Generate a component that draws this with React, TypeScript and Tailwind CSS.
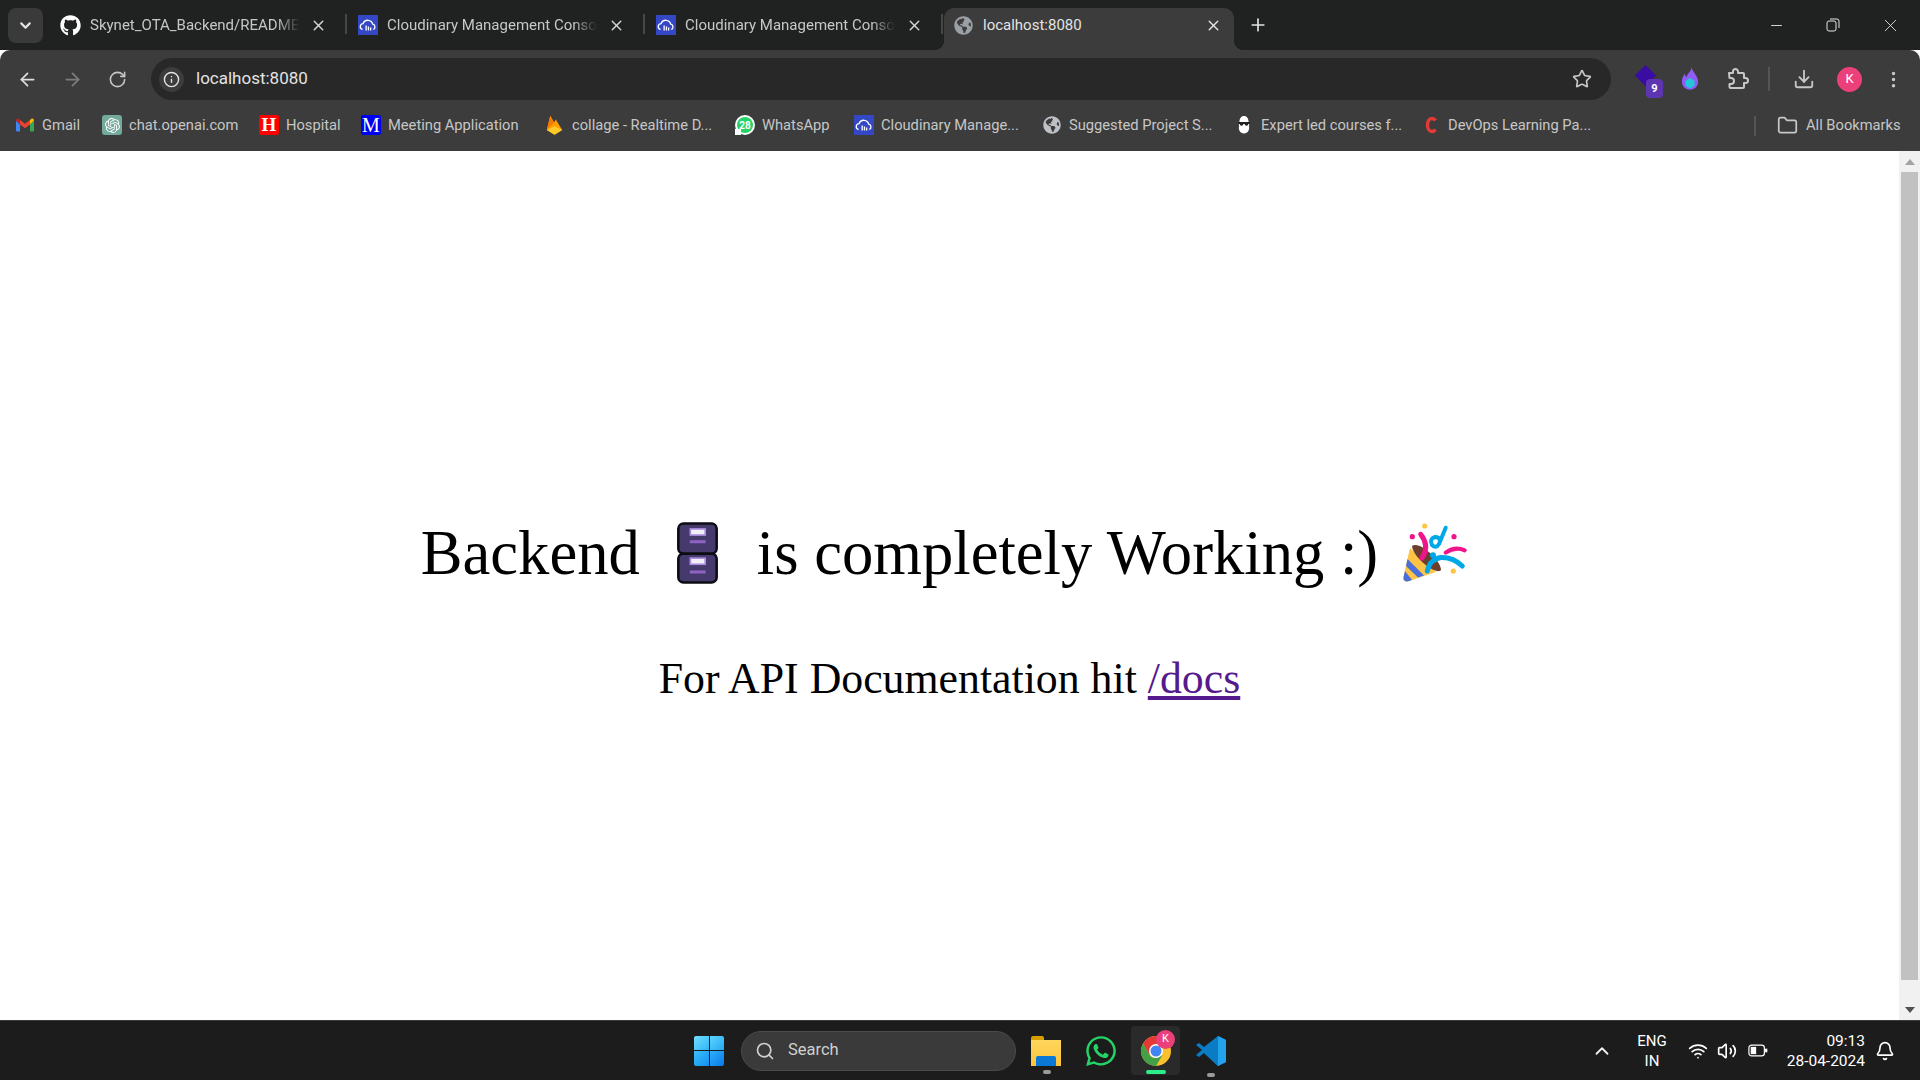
import { ArrowLeft, ArrowRight, RotateCw, Info, Star, Download, EllipsisVertical, Plus, X, ChevronDown, ChevronUp, Minus, Folder, Search, Wifi, Volume2, Bell } from "lucide-react";
import { FaGithub, FaWhatsapp, FaGlobeAmericas } from "react-icons/fa";
import { SiOpenai } from "react-icons/si";

const uiFont = "font-['Roboto','Open_Sans',sans-serif]";

const CloudinaryIcon = () => (
  <svg viewBox="0 0 20 20" className="w-5 h-5 shrink-0">
    <rect width="20" height="20" fill="#3448c5" />
    <path d="M4.5 14.5a3 3 0 0 1 .6-5.9 5 5 0 0 1 9.6.6 2.8 2.8 0 0 1 .6 5.3" fill="none" stroke="#fff" strokeWidth="1.3" />
    <path d="M7.5 10.5h1.3v5H7.500zM9.800 11.500h1.300v4H9.800zM12 12.500h1.300v3H12z" fill="#fff" />
  </svg>
);

const GmailIcon = () => (
  <svg viewBox="0 0 20 20" className="w-5 h-5 shrink-0">
    <path d="M1 5.500v9.800q0 1.200 1.200 1.200H5V9.500z" fill="#4285f4" />
    <path d="M19 5.500v9.800q0 1.200-1.200 1.200H15V9.500z" fill="#34a853" />
    <path d="M1 5.500 5 9.500V5L3.500 3.800Q1.500 2.800 1 5.500z" fill="#c5221f" />
    <path d="M5 5v4.500l5 3.700 5-3.700V5l-5 3.800z" fill="#ea4335" />
    <path d="M15 5v4.500l4-4q-.5-2.700-2.500-1.700z" fill="#fbbc04" />
  </svg>
);

const FirebaseIcon = () => (
  <svg viewBox="0 0 20 24" className="w-[17px] h-[22px] shrink-0 mx-[2px]">
    <path d="M1 18 5 1l4.500 8 2-3.500L19 18l-9 5.500z" fill="#ffa000" />
    <path d="M9.500 9 1 18 5 1z" fill="#f57c00" />
    <path d="M1 18 10 13.500 19 18l-9 5.500z" fill="#ffca28" />
  </svg>
);

const ExpertIcon = () => (
  <svg viewBox="0 0 20 20" className="w-5 h-5 shrink-0">
    <path d="M10 1c3 0 4.500 2.500 4.500 5.500l1 1.500-.6 3c1 3-.8 7.500-4.900 7.500s-5.900-4.500-4.900-7.500l-.6-3 1-1.500C5.500 3.500 7 1 10 1z" fill="#fff" />
    <rect x="4" y="7" width="12" height="2" fill="#222" />
    <circle cx="7.500" cy="9" r="1.800" fill="#222" />
    <circle cx="12.500" cy="9" r="1.800" fill="#222" />
  </svg>
);

const DevopsIcon = () => (
  <svg viewBox="0 0 20 20" className="w-5 h-5 shrink-0">
    <path d="M14.500 5.500C13.500 4 12.500 3.500 11 3.500 8.500 3.500 6.500 6 6.500 10s2 6.500 4.500 6.500c1.500 0 2.500-.5 3.500-2" fill="none" stroke="#e53935" strokeWidth="3.400" />
  </svg>
);

const WhatsappBadge = () => (
  <span className="relative w-5 h-5 shrink-0 rounded-full bg-[#25d366] border-2 border-white flex items-center justify-center text-white text-[10px] font-bold">
    <span className="absolute left-[-2px] bottom-[-2px] w-[6px] h-[6px] bg-white" />
    <span className="relative">28</span>
  </span>
);

const bookmarks = [
  { label: "Gmail", icon: <GmailIcon />, width: "w-[87px]" },
  { label: "chat.openai.com", icon: <span className="w-5 h-5 shrink-0 rounded-[3px] bg-[#74aa9c] flex items-center justify-center text-white"><SiOpenai size={15} /></span>, width: "w-[157px]" },
  { label: "Hospital", icon: <span className="w-5 h-5 shrink-0 rounded-[2px] bg-[#ff0000] flex items-center justify-center text-white font-bold text-[19px] font-['Liberation_Serif',serif]">H</span>, width: "w-[102px]" },
  { label: "Meeting Application", icon: <span className="w-5 h-5 shrink-0 rounded-[2px] bg-[#0000f0] flex items-center justify-center text-white text-[20px] font-['Liberation_Serif',serif]">M</span>, width: "w-[183px]" },
  { label: "collage - Realtime D...", icon: <FirebaseIcon />, width: "w-[191px]" },
  { label: "WhatsApp", icon: <WhatsappBadge />, width: "w-[119px]" },
  { label: "Cloudinary Manage...", icon: <CloudinaryIcon />, width: "w-[188px]" },
  { label: "Suggested Project S...", icon: <span className="text-[#bdc1c6] shrink-0 w-5 flex justify-center"><FaGlobeAmericas size={18} /></span>, width: "w-[192px]" },
  { label: "Expert led courses f...", icon: <ExpertIcon />, width: "w-[187px]" },
  { label: "DevOps Learning Pa...", icon: <DevopsIcon />, width: "w-[190px]" },
];

function Tab({ title, icon }: { title: string; icon: React.ReactNode }) {
  return (
    <div className="relative w-[298px] h-[42px] flex items-center pb-[8px] pl-[11px] pr-[14px] text-[#c7c7c7] shrink-0">
      {icon}
      <span className="ml-[9px] w-[210px] overflow-hidden whitespace-nowrap text-[15px] [mask-image:linear-gradient(to_left,transparent,black_24px)]">{title}</span>
      <X size={17} className="ml-auto mr-[6px] text-[#d5d5d5]" />
      <span className="absolute right-0 top-[6px] w-[2px] h-[20px] bg-[#474747]" />
    </div>
  );
}

function ActiveTab() {
  return (
    <div className="relative w-[290px] h-[42px] ml-[1px] rounded-t-[10px] bg-[#3c3c3c] flex items-center pb-[8px] pl-[9px] pr-[12px] text-[#e3e3e3] shrink-0">
      <span className="absolute left-[-10px] bottom-0 w-[10px] h-[10px] bg-[radial-gradient(circle_at_0_0,transparent_10px,#3c3c3c_10.500px)]" />
      <span className="absolute right-[-10px] bottom-0 w-[10px] h-[10px] bg-[radial-gradient(circle_at_100%_0,transparent_10px,#3c3c3c_10.500px)]" />
      <span className="text-[#9aa0a6] ml-[1px]"><FaGlobeAmericas size={19} /></span>
      <span className="ml-[10px] text-[15px]">localhost:8080</span>
      <X size={17} className="ml-auto text-[#e3e3e3]" />
    </div>
  );
}

const FileCabinet = () => (
  <svg viewBox="0 0 40 60" className="w-[41px] h-[62px] ml-[37px] mr-[39px] shrink-0">
    <rect x="1.300" y="1.300" width="37.400" height="29.400" rx="5" fill="#453a6b" stroke="#0c0c14" strokeWidth="2.500" />
    <rect x="1.300" y="30.700" width="37.400" height="28" rx="5" fill="#453a6b" stroke="#0c0c14" strokeWidth="2.500" />
    <rect x="13" y="6.500" width="14.500" height="6" fill="#f2f0f7" stroke="#a98adf" strokeWidth="1.600" />
    <rect x="12.500" y="17.500" width="15.500" height="3" fill="#8f62c4" />
    <rect x="13" y="35" width="14.500" height="6" fill="#f2f0f7" stroke="#a98adf" strokeWidth="1.600" />
    <rect x="12.500" y="47" width="15.500" height="3" fill="#8f62c4" />
  </svg>
);

const PartyPopper = () => (
  <svg viewBox="0 0 64 62" className="w-[64px] h-[62px] ml-[25px] shrink-0">
    <path d="M7 26 .5 55q-1 5 4 4.500L33 50z" fill="#ffc445" />
    <path d="M4.500 37 21 53.500 15 55.500 3 44zM2 49l7 9-4.500 1.500q-4.500 0-4-4.500z" fill="#4a6fd8" />
    <path d="M9 24C16 18 38 38 38 48 34 54 10 36 9 24z" fill="#6b3f2c" />
    <path d="M17.700 12.300Q27 24 19 36" fill="none" stroke="#f0148c" strokeWidth="5" strokeLinecap="round" />
    <path d="M42.700 5.700 36 22q-3 5-7 1-3-6 3-8 4 0 5 3" fill="none" stroke="#00a8e8" strokeWidth="4" strokeLinecap="round" />
    <path d="M42.700 30.700Q52 24 61.700 28.300" fill="none" stroke="#f0148c" strokeWidth="4" strokeLinecap="round" />
    <path d="M24.300 49Q27 37 38 35.500 50 35 59.300 44" fill="none" stroke="#00a8e8" strokeWidth="5" strokeLinecap="round" />
    <circle cx="30" cy="33.300" r="3" fill="#00a8e8" />
    <circle cx="9.300" cy="14.700" r="2.600" fill="#f0148c" />
    <circle cx="21.700" cy="4" r="2.600" fill="#ffc445" />
    <circle cx="51" cy="14.700" r="2.600" fill="#f0148c" />
    <circle cx="50.300" cy="49" r="2.600" fill="#ffc445" />
  </svg>
);

const ChromeIcon = () => (
  <svg viewBox="0 0 32 32" className="w-8 h-8">
    <circle cx="16" cy="16" r="15" fill="#fbc02d" />
    <path d="M16 1a15 15 0 0 0-13 7.500L9.500 20 16 9h13A15 15 0 0 0 16 1z" fill="#e53935" />
    <path d="M3 8.500A15 15 0 0 0 16 31l6.500-11-6.500 3a7 7 0 0 1-6.500-3z" fill="#43a047" />
    <circle cx="16" cy="16" r="7" fill="#fff" />
    <circle cx="16" cy="16" r="5.500" fill="#4285f4" />
  </svg>
);

const VSCodeIcon = () => (
  <svg viewBox="0 0 32 32" className="w-8 h-8">
    <path d="M23 1 31 5v22l-8 4-14-13z" fill="#0a7cc4" />
    <path d="M23 1 31 5v22l-8 4z" fill="#23a3ee" />
    <path d="m23 9-9 7 9 7v8L9 18l-5 4-3-2 6-5-6-5 3-2 5 4L23 1z" fill="#0a7cc4" />
  </svg>
);

const PuzzleOutline = () => (
  <svg viewBox="0 0 24 24" className="w-[24px] h-[24px] ml-[26px] text-[#c7c7c7]" fill="none" stroke="currentColor" strokeWidth="2" strokeLinejoin="round">
    <path d="M4 6h4V4.500a2.500 2.500 0 0 1 5 0V6h5q1 0 1 1v4h1.500a2.500 2.500 0 0 1 0 5H19v4q0 1-1 1H5.500q-1 0-1-1v-3H6a3 3 0 0 0 0-6H4.500z" />
  </svg>
);

export default function App() {
  return (
    <div className={`w-[1920px] h-[1080px] flex flex-col overflow-hidden bg-white ${uiFont}`}>
      {/* tab strip */}
      <div className="h-[50px] bg-[#202221] flex items-end shrink-0">
        <div className="w-[35px] h-[35px] ml-2 mb-[7px] mr-[6px] rounded-lg bg-[#3a3a3a] flex items-center justify-center text-[#e3e3e3] shrink-0">
          <ChevronDown size={17} strokeWidth={3} />
        </div>
        <Tab title="Skynet_OTA_Backend/README.md" icon={<FaGithub size={21} className="text-white shrink-0" />} />
        <Tab title="Cloudinary Management Console" icon={<CloudinaryIcon />} />
        <Tab title="Cloudinary Management Console" icon={<CloudinaryIcon />} />
        <ActiveTab />
        <Plus size={20} className="ml-[14px] mb-[15px] text-[#e3e3e3] shrink-0" />
        <div className="ml-auto flex items-center h-[50px] text-[#e3e3e3]">
          <Minus size={17} strokeWidth={1.3} className="mr-[41px]" />
          <svg viewBox="0 0 14 14" className="w-[14px] h-[14px] mr-[40px]" fill="none" stroke="currentColor">
            <rect x="1" y="3" width="9" height="10" rx="2" />
            <path d="M4 1h7q2 0 2 2v7" />
          </svg>
          <X size={21} strokeWidth={1} className="mr-[19px]" />
        </div>
      </div>

      {/* toolbar */}
      <div className="h-[58px] bg-[#3c3c3c] flex items-center shrink-0 rounded-tl-[10px] rounded-tr-[10px]">
        <ArrowLeft size={21} className="ml-[17px] text-[#dedede]" />
        <ArrowRight size={21} className="ml-[24px] text-[#7d7d7d]" />
        <RotateCw size={19} className="ml-[25px] text-[#c7c7c7]" />
        <div className="ml-[24px] w-[1460px] h-[42px] rounded-full bg-[#282828] flex items-center pl-[8px] pr-[19px]">
          <span className="w-[25px] h-[25px] rounded-full bg-[#3c3c3c] flex items-center justify-center text-[#e3e3e3]"><Info size={17} /></span>
          <span className="ml-[12px] text-[17px] text-[#e3e3e3]">localhost:8080</span>
          <Star size={20} className="ml-auto text-[#c7c7c7]" />
        </div>
        <div className="relative w-6 h-6 ml-[25px]">
          <span className="absolute left-[2px] top-[1px] w-[15px] h-[15px] rotate-45 bg-[#3a0ca3]" />
          <span className="absolute left-[10px] top-[12px] w-[17px] h-[19px] rounded-[4px] bg-[#5e35b1] text-white text-[11px] font-bold leading-[19px] text-center">9</span>
        </div>
        <svg viewBox="0 0 20 26" className="w-[18px] h-[24px] ml-[21px]">
          <path d="M12 0c0 5 7 9 7 16a9 9 0 0 1-18 0c0-4 1.500-6 3-9 .5 2 1 3 2 4 1-4 5-6 6-11z" fill="#8f5cf5" />
          <path d="m10 12 5 3v5.500l-5 3-5-3V15z" fill="#22c7d8" />
        </svg>
        <PuzzleOutline />
        <span className="ml-[19px] w-[2px] h-6 bg-[#555]" />
        <Download size={22} className="ml-[23px] text-[#c7c7c7]" />
        <span className="ml-[22px] w-[25px] h-[25px] rounded-full bg-[#ec407a] text-white text-[13px] flex items-center justify-center">K</span>
        <EllipsisVertical size={21} className="ml-[21px] text-[#c7c7c7]" />
      </div>

      {/* bookmarks bar */}
      <div className="h-[43px] pb-[8px] bg-[#3c3c3c] flex items-center pl-[15px] shrink-0 text-[14.7px] text-[#c7c7c7]">
        {bookmarks.map((b) => (
          <div key={b.label} className={`flex items-center gap-[7px] whitespace-nowrap shrink-0 ${b.width}`}>
            {b.icon}
            <span>{b.label}</span>
          </div>
        ))}
        <span className="ml-[143px] w-[2px] h-[20px] bg-[#555]" />
        <Folder size={21} className="ml-[21px] text-[#c7c7c7]" />
        <span className="ml-2">All Bookmarks</span>
      </div>

      {/* page */}
      <div className="flex-1 flex min-h-0">
        <main className="flex-1 flex flex-col items-center pt-[367px] font-['Liberation_Serif',serif] text-black">
          <h1 className="flex items-center text-[62.6px] leading-[70px] whitespace-nowrap font-normal pr-[11px]">
            Backend
            <FileCabinet />
            is completely Working :)
            <PartyPopper />
          </h1>
          <p className="mt-[65px] text-[43.8px] leading-[50px] whitespace-nowrap">
            For API Documentation hit <a href="#docs" className="text-[#551a8b] underline">/docs</a>
          </p>
        </main>
        <div className="w-[21px] bg-[#f1f1f1] flex flex-col items-center justify-between">
          <div className="w-full">
            <div className="h-[21px] flex items-center justify-center"><span className="border-x-[5px] border-b-[6px] border-x-transparent border-b-[#a3a3a3]" /></div>
            <div className="mx-auto w-[17px] h-[808px] bg-[#c1c1c1]" />
          </div>
          <div className="h-[21px] flex items-center justify-center"><span className="border-x-[5px] border-t-[6px] border-x-transparent border-t-[#505050]" /></div>
        </div>
      </div>

      {/* taskbar */}
      <div className="h-[60px] bg-[#1c1c1c] border-t border-[#3a3a3a] flex items-center shrink-0 relative text-white">
        <div className="ml-[694px] grid grid-cols-2 gap-[1px] w-[30px] h-[30px] shrink-0">
          <span className="bg-gradient-to-br from-[#6fe0ff] to-[#2db4f5] rounded-tl-[2px]" />
          <span className="bg-gradient-to-br from-[#5cd5ff] to-[#20a8f0] rounded-tr-[2px]" />
          <span className="bg-gradient-to-br from-[#3cc0fb] to-[#128ff0] rounded-bl-[2px]" />
          <span className="bg-gradient-to-br from-[#2eb0fa] to-[#0a78e8] rounded-br-[2px]" />
        </div>
        <div className="ml-[17px] w-[275px] h-[40px] rounded-full bg-[#3a3a3a] border border-[#4a4a4a] flex items-center pl-[13px] text-[#d0d0d0] shrink-0">
          <Search size={20} />
          <span className="ml-[13px] text-[16.5px]">Search</span>
        </div>
        <div className="relative ml-[15px] w-[30px] h-[30px] shrink-0">
          <span className="absolute left-0 top-0 w-[13px] h-[6px] bg-[#d99e00] rounded-t-[2px]" />
          <span className="absolute left-0 top-[4px] w-[30px] h-[26px] bg-gradient-to-b from-[#ffd65c] to-[#fdc43c]" />
          <span className="absolute left-[5px] top-[20px] w-[20px] h-[10px] bg-[#0a78d4] rounded-t-[2px]" />
          <span className="absolute left-[12px] top-[34px] w-[8px] h-[4px] rounded-full bg-[#9a9a9a]" />
        </div>
        <FaWhatsapp size={34} className="ml-[23px] text-[#25d366] shrink-0" />
        <div className="relative ml-[13px] w-[49px] h-[49px] rounded-[4px] bg-[#2a2a2a] flex items-center justify-center shrink-0">
          <ChromeIcon />
          <span className="absolute right-[5px] top-[4px] w-[19px] h-[19px] rounded-full bg-[#ec407a] text-[11px] flex items-center justify-center">K</span>
          <span className="absolute bottom-[1px] left-[15px] w-[20px] h-[4px] rounded-full bg-[#2bf08a]" />
        </div>
        <div className="relative ml-[15px] shrink-0">
          <VSCodeIcon />
          <span className="absolute left-[12px] top-[38px] w-[8px] h-[4px] rounded-full bg-[#9a9a9a]" />
        </div>
        <ChevronUp size={22} className="ml-[364px] text-[#f0f0f0]" />
        <div className="ml-[19px] w-[40px] text-center text-[15px] leading-[20px]">ENG<br />IN</div>
        <Wifi size={20} className="ml-[16px]" />
        <Volume2 size={20} className="ml-[9px]" />
        <svg viewBox="0 0 22 14" className="ml-[11px] w-[20px] h-[13px]" fill="none" stroke="currentColor" strokeWidth="1.300">
          <rect x="1" y="1" width="17" height="12" rx="3" />
          <rect x="3" y="3" width="6" height="8" fill="currentColor" stroke="none" />
          <path d="M20 5v4" strokeWidth="2.500" />
        </svg>
        <div className="ml-[17px] w-[80px] text-right text-[15.5px] leading-[20px] whitespace-nowrap">09:13<br />28-04-2024</div>
        <Bell size={20} className="ml-[10px]" />
      </div>
    </div>
  );
}
